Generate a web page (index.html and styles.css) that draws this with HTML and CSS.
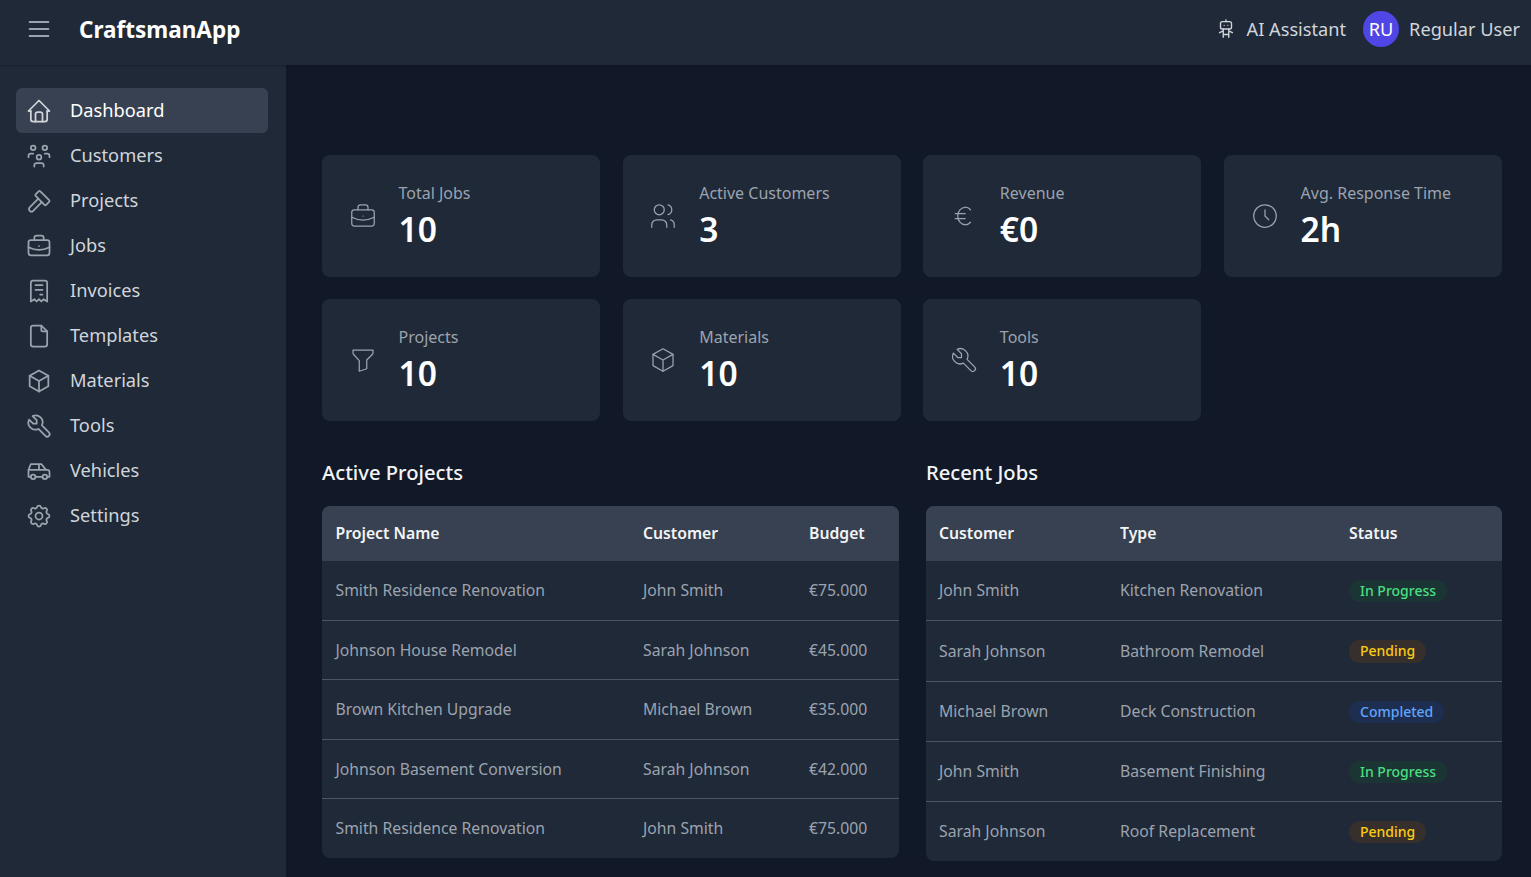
FILE: index.html
```html
<!DOCTYPE html>
<html lang="en">
<head>
<meta charset="utf-8">
<title>CraftsmanApp</title>
<link rel="stylesheet" href="styles.css">
</head>
<body>
<header class="topbar">
  <div class="brand">
    <svg class="menu-icon" viewBox="0 0 24 24"><path d="M4 6h16M4 12h16M4 18h16"/></svg>
    <span class="brand-name">CraftsmanApp</span>
  </div>
  <div class="top-actions">
    <div class="assistant">
      <svg class="assistant-icon" viewBox="0 0 24 24"><path d="M6 6a2 2 0 0 1 2-2h8a2 2 0 0 1 2 2v4a2 2 0 0 1-2 2H8a2 2 0 0 1-2-2z"/><path d="M12 2v2M9 12v9M15 12v9M5 16l4-2M15 14l4 2M9 18h6M10 8v.01M14 8v.01"/></svg>
      <span>AI Assistant</span>
    </div>
    <div class="user">
      <span class="avatar">RU</span>
      <span>Regular User</span>
    </div>
  </div>
</header>
<div class="shell">
  <nav class="sidebar">
    <a class="nav-item active"><svg viewBox="0 0 24 24"><path d="M5 12H3l9-9 9 9h-2"/><path d="M5 12v7a2 2 0 0 0 2 2h10a2 2 0 0 0 2-2v-7"/><path d="M9 21v-6a2 2 0 0 1 2-2h2a2 2 0 0 1 2 2v6"/></svg><span>Dashboard</span></a>
    <a class="nav-item"><svg viewBox="0 0 24 24"><path d="M10 13a2 2 0 1 0 4 0a2 2 0 0 0-4 0"/><path d="M8 21v-1a2 2 0 0 1 2-2h4a2 2 0 0 1 2 2v1"/><path d="M15 5a2 2 0 1 0 4 0a2 2 0 0 0-4 0"/><path d="M17 10h2a2 2 0 0 1 2 2v1"/><path d="M5 5a2 2 0 1 0 4 0a2 2 0 0 0-4 0"/><path d="M3 13v-1a2 2 0 0 1 2-2h2"/></svg><span>Customers</span></a>
    <a class="nav-item"><svg viewBox="0 0 24 24"><path d="M11.414 10l-7.383 7.418a2.091 2.091 0 0 0 0 2.967a2.11 2.11 0 0 0 2.976 0l7.407-7.385"/><path d="M18.121 15.293l2.586-2.586a1 1 0 0 0 0-1.414l-7.586-7.586a1 1 0 0 0-1.414 0l-2.586 2.586a1 1 0 0 0 0 1.414l7.586 7.586a1 1 0 0 0 1.414 0z"/></svg><span>Projects</span></a>
    <a class="nav-item"><svg viewBox="0 0 24 24"><path d="M3 9a2 2 0 0 1 2-2h14a2 2 0 0 1 2 2v9a2 2 0 0 1-2 2H5a2 2 0 0 1-2-2z"/><path d="M8 7V5a2 2 0 0 1 2-2h4a2 2 0 0 1 2 2v2M12 12v.01M3 13a20 20 0 0 0 18 0"/></svg><span>Jobs</span></a>
    <a class="nav-item"><svg viewBox="0 0 24 24"><path d="M5 21V5a2 2 0 0 1 2-2h10a2 2 0 0 1 2 2v16l-3-2-2 2-2-2-2 2-2-2-3 2m4-14h6m-6 4h6m-2 4h2"/></svg><span>Invoices</span></a>
    <a class="nav-item"><svg viewBox="0 0 24 24"><path d="M14 3v4a1 1 0 0 0 1 1h4"/><path d="M17 21H7a2 2 0 0 1-2-2V5a2 2 0 0 1 2-2h7l5 5v11a2 2 0 0 1-2 2z"/></svg><span>Templates</span></a>
    <a class="nav-item"><svg viewBox="0 0 24 24"><path d="M12 3l8 4.500v9L12 21l-8-4.500v-9z"/><path d="M12 12l8-4.500M12 12v9M12 12L4 7.500"/></svg><span>Materials</span></a>
    <a class="nav-item"><svg viewBox="0 0 24 24"><path d="M7 10h3V7L6.500 3.500a6 6 0 0 1 8 8l6 6a2 2 0 0 1-3 3l-6-6a6 6 0 0 1-8-8L7 10"/></svg><span>Tools</span></a>
    <a class="nav-item"><svg viewBox="0 0 24 24"><path d="M5 17a2 2 0 1 0 4 0a2 2 0 1 0-4 0"/><path d="M15 17a2 2 0 1 0 4 0a2 2 0 1 0-4 0"/><path d="M5 17H3v-6l2-5h9l4 5h1a2 2 0 0 1 2 2v4h-2m-4 0H9m-6-6h15m-6 0V6"/></svg><span>Vehicles</span></a>
    <a class="nav-item"><svg viewBox="0 0 24 24"><path d="M10.325 4.317c.426-1.756 2.924-1.756 3.350 0a1.724 1.724 0 0 0 2.573 1.066c1.543-.940 3.310.826 2.370 2.370a1.724 1.724 0 0 0 1.065 2.572c1.756.426 1.756 2.924 0 3.350a1.724 1.724 0 0 0-1.066 2.573c.940 1.543-.826 3.310-2.370 2.370a1.724 1.724 0 0 0-2.572 1.065c-.426 1.756-2.924 1.756-3.350 0a1.724 1.724 0 0 0-2.573-1.066c-1.543.940-3.310-.826-2.370-2.370a1.724 1.724 0 0 0-1.065-2.572c-1.756-.426-1.756-2.924 0-3.350a1.724 1.724 0 0 0 1.066-2.573c-.940-1.543.826-3.310 2.370-2.370c1 .608 2.296.070 2.572-1.065z"/><path d="M9 12a3 3 0 1 0 6 0a3 3 0 0 0-6 0"/></svg><span>Settings</span></a>
  </nav>
  <main class="content">
    <section class="stats">
      <div class="stat"><svg viewBox="0 0 24 24"><path d="M3 9a2 2 0 0 1 2-2h14a2 2 0 0 1 2 2v9a2 2 0 0 1-2 2H5a2 2 0 0 1-2-2z"/><path d="M8 7V5a2 2 0 0 1 2-2h4a2 2 0 0 1 2 2v2M12 12v.01M3 13a20 20 0 0 0 18 0"/></svg><div><div class="stat-label">Total Jobs</div><div class="stat-value">10</div></div></div>
      <div class="stat"><svg viewBox="0 0 24 24"><path d="M5 7a4 4 0 1 0 8 0a4 4 0 0 0-8 0"/><path d="M3 21v-2a4 4 0 0 1 4-4h4a4 4 0 0 1 4 4v2M16 3.130a4 4 0 0 1 0 7.750M21 21v-2a4 4 0 0 0-3-3.850"/></svg><div><div class="stat-label">Active Customers</div><div class="stat-value">3</div></div></div>
      <div class="stat"><svg viewBox="0 0 24 24"><path d="M17.200 7a6 7 0 1 0 0 10"/><path d="M13 10H5m0 4h8"/></svg><div><div class="stat-label">Revenue</div><div class="stat-value">€0</div></div></div>
      <div class="stat"><svg viewBox="0 0 24 24"><path d="M3 12a9 9 0 1 0 18 0a9 9 0 0 0-18 0"/><path d="M12 7v5l3 3"/></svg><div><div class="stat-label">Avg. Response Time</div><div class="stat-value">2h</div></div></div>
      <div class="stat"><svg viewBox="0 0 24 24"><path d="M4 4h16v2.172a2 2 0 0 1-.586 1.414L15 12v7l-6 2v-8.500L4.520 7.580A2 2 0 0 1 4 6.235z"/></svg><div><div class="stat-label">Projects</div><div class="stat-value">10</div></div></div>
      <div class="stat"><svg viewBox="0 0 24 24"><path d="M12 3l8 4.500v9L12 21l-8-4.500v-9z"/><path d="M12 12l8-4.500M12 12v9M12 12L4 7.500"/></svg><div><div class="stat-label">Materials</div><div class="stat-value">10</div></div></div>
      <div class="stat"><svg viewBox="0 0 24 24"><path d="M7 10h3V7L6.500 3.500a6 6 0 0 1 8 8l6 6a2 2 0 0 1-3 3l-6-6a6 6 0 0 1-8-8L7 10"/></svg><div><div class="stat-label">Tools</div><div class="stat-value">10</div></div></div>
    </section>
    <section class="tables">
      <div class="panel">
        <h2>Active Projects</h2>
        <table class="table projects">
          <thead><tr><th>Project Name</th><th>Customer</th><th>Budget</th></tr></thead>
          <tbody>
            <tr><td>Smith Residence Renovation</td><td>John Smith</td><td>€75.000</td></tr>
            <tr><td>Johnson House Remodel</td><td>Sarah Johnson</td><td>€45.000</td></tr>
            <tr><td>Brown Kitchen Upgrade</td><td>Michael Brown</td><td>€35.000</td></tr>
            <tr><td>Johnson Basement Conversion</td><td>Sarah Johnson</td><td>€42.000</td></tr>
            <tr><td>Smith Residence Renovation</td><td>John Smith</td><td>€75.000</td></tr>
          </tbody>
        </table>
      </div>
      <div class="panel">
        <h2>Recent Jobs</h2>
        <table class="table jobs">
          <thead><tr><th>Customer</th><th>Type</th><th>Status</th></tr></thead>
          <tbody>
            <tr><td>John Smith</td><td>Kitchen Renovation</td><td><span class="badge green">In Progress</span></td></tr>
            <tr><td>Sarah Johnson</td><td>Bathroom Remodel</td><td><span class="badge yellow">Pending</span></td></tr>
            <tr><td>Michael Brown</td><td>Deck Construction</td><td><span class="badge blue">Completed</span></td></tr>
            <tr><td>John Smith</td><td>Basement Finishing</td><td><span class="badge green">In Progress</span></td></tr>
            <tr><td>Sarah Johnson</td><td>Roof Replacement</td><td><span class="badge yellow">Pending</span></td></tr>
          </tbody>
        </table>
      </div>
    </section>
  </main>
</div>
</body>
</html>
```
FILE: styles.css
```css
* { box-sizing: border-box; }
html, body { margin: 0; height: 100%; }
body { background: #111827; color: #f3f4f6; font-family: "Noto Sans", sans-serif; overflow: hidden; }
svg { fill: none; stroke: currentColor; stroke-linecap: round; stroke-linejoin: round; flex: none; }
.topbar { position: relative; height: 65px; background: #1f2937; display: flex; align-items: center; justify-content: space-between; padding: 0 11px 7px 25px; box-shadow: 0 1px 2px rgba(0, 0, 0, .2); }
.brand { display: flex; align-items: center; gap: 26px; }
.menu-icon { width: 28px; height: 28px; color: #9ca3af; stroke-width: 1.75; }
.brand-name { font-size: 22.500px; font-weight: 700; color: #fff; }
.top-actions { display: flex; align-items: center; gap: 17px; font-size: 18.200px; color: #d1d5db; }
.assistant, .user { display: flex; align-items: center; }
.assistant { gap: 10px; }
.user { gap: 10px; }
.assistant-icon { width: 22px; height: 22px; stroke-width: 1.500; }
.avatar { width: 36px; height: 36px; border-radius: 50%; background: #4f46e5; color: #fff; display: flex; align-items: center; justify-content: center; }
.shell { display: flex; height: 812px; }
.sidebar { width: 286px; background: #1f2937; padding: 23px 18px 0 16px; display: flex; flex-direction: column; }
.nav-item { height: 45px; display: flex; align-items: center; gap: 17px; padding-left: 9px; font-size: 18.240px; color: #d1d5db; border-radius: 6px; }
.nav-item span { margin-top: -1px; }
.nav-item.active { background: #374151; color: #fff; }
.nav-item svg { width: 28px; height: 28px; color: #9ca3af; stroke-width: 1.5; }
.nav-item.active svg { color: #d1d5db; }
.content { flex: 1; padding: 90px 29px 0 36px; min-width: 0; }
.stats { display: grid; grid-template-columns: repeat(4, 278px); column-gap: 22.700px; row-gap: 22px; }
.stat { height: 122px; background: #1f2937; border-radius: 8px; display: flex; align-items: center; gap: 20.900px; padding-left: 25.600px; }
.stat svg { width: 30px; height: 30px; color: #9ca3af; stroke-width: 1; }
.stat-label { font-size: 16px; line-height: 24px; color: #9ca3af; margin-top: -2px; }
.stat-value { font-size: 33.600px; line-height: 40px; font-weight: 600; color: #fff; margin-top: 4px; }
.tables { display: grid; grid-template-columns: 577px 576px; column-gap: 27px; margin-top: 36px; }
h2 { margin: 0 0 18px; font-size: 20.200px; line-height: 31px; font-weight: 500; color: #f3f4f6; }
.table { width: 100%; border-collapse: separate; border-spacing: 0; background: #1f2937; border-radius: 8px; overflow: hidden; table-layout: fixed; font-size: 15.750px; color: #9ca3af; }
.table th { height: 55px; background: #374151; color: #f3f4f6; text-align: left; font-weight: 600; padding: 0 0 1px 13.500px; }
.table td { padding: 0 0 0 13.500px; border-bottom: 1px solid #4b5563; }
.table tbody tr:last-child td { border-bottom: 0; }
.projects td { height: 59px; }
.projects tr:nth-child(odd) td { height: 60px; padding-bottom: 1px; }
.projects tr:last-child td { height: 59px; }
.jobs td { height: 60px; }
.jobs tr:nth-child(2) td { height: 61px; }
.jobs tr:last-child td { height: 59px; }
.jobs th, .jobs td { padding-left: 13px; }
.jobs td:not(:last-child) { padding-bottom: 1px; }
.jobs tr:nth-child(2) td:not(:last-child) { padding-bottom: 0; }
.projects th:nth-child(1) { width: 307.500px; }
.projects th:nth-child(2) { width: 166px; }
.jobs th:nth-child(1) { width: 181px; }
.jobs th:nth-child(2) { width: 229px; }
.badge { display: inline-block; padding: 0 11px; border-radius: 11px; font-size: 14px; line-height: 22.400px; font-weight: 500; }
.green { background: rgba(20, 83, 45, .3); color: #4ade80; }
.yellow { background: rgba(113, 63, 18, .3); color: #facc15; }
.blue { background: rgba(30, 58, 138, .3); color: #60a5fa; }
```
